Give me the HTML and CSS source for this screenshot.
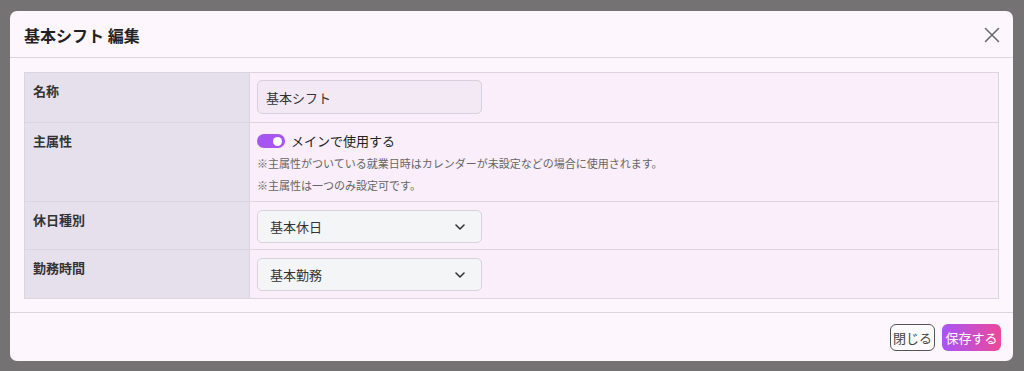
FILE: index.html
```html
<!DOCTYPE html>
<html lang="ja">
<head>
    <meta charset="UTF-8">
    <meta name="viewport" content="width=device-width, initial-scale=1.0">
    <title>基本シフト 編集</title>
    <link rel="stylesheet" href="styles.css">
</head>
<body>
    <div class="modal">
        <div class="modal-header">
            <h2>基本シフト 編集</h2>
            <button class="close" aria-label="閉じる">
                <svg width="16" height="16" viewBox="0 0 16 16"><path d="M1.5 1.5 L14.5 14.5 M14.5 1.5 L1.5 14.5" stroke="#6b6b6b" stroke-width="1.6" fill="none" stroke-linecap="round"/></svg>
            </button>
        </div>

        <div class="modal-body">
            <table class="form-table">
                <tr class="row-name">
                    <th>名称</th>
                    <td><input class="text-input" type="text" value="基本シフト"></td>
                </tr>
                <tr class="row-main">
                    <th>主属性</th>
                    <td>
                        <label class="switch-line">
                            <span class="switch"><span class="knob"></span></span>
                            メインで使用する
                        </label>
                        <p class="note">※主属性がついている就業日時はカレンダーが未設定などの場合に使用されます。</p>
                        <p class="note">※主属性は一つのみ設定可です。</p>
                    </td>
                </tr>
                <tr class="row-select">
                    <th>休日種別</th>
                    <td>
                        <div class="select">
                            <span>基本休日</span>
                            <svg width="12" height="8" viewBox="0 0 12 8"><path d="M2 2 L6 6 L10 2" stroke="#333" stroke-width="1.6" fill="none" stroke-linecap="round" stroke-linejoin="round"/></svg>
                        </div>
                    </td>
                </tr>
                <tr class="row-select last">
                    <th>勤務時間</th>
                    <td>
                        <div class="select">
                            <span>基本勤務</span>
                            <svg width="12" height="8" viewBox="0 0 12 8"><path d="M2 2 L6 6 L10 2" stroke="#333" stroke-width="1.6" fill="none" stroke-linecap="round" stroke-linejoin="round"/></svg>
                        </div>
                    </td>
                </tr>
            </table>
        </div>

        <div class="modal-footer">
            <button class="btn btn-outline">閉じる</button>
            <button class="btn btn-primary">保存する</button>
        </div>
    </div>
</body>
</html>
```

FILE: styles.css
```css
body {
    margin: 0;
    padding: 11px 11px 10px 10px;
    background-color: #757274;
    font-family: "Noto Sans CJK JP", "Noto Sans", sans-serif;
    color: #333;
    height: 371px;
    box-sizing: border-box;
}
.modal {
    background: #fdf7fd;
    border-radius: 7px;
    height: 350px;
    display: flex;
    flex-direction: column;
    overflow: hidden;
}
.modal-header {
    height: 47px;
    flex-shrink: 0;
    box-sizing: border-box;
    border-bottom: 1px solid #ddd5df;
    display: flex;
    align-items: center;
    justify-content: space-between;
    padding: 1px 13px 0 14px;
}
.modal-header h2 {
    margin: 0;
    font-size: 16px;
    font-weight: bold;
    color: #222;
}
.close {
    background: none;
    border: none;
    padding: 0;
    width: 16px;
    height: 16px;
    cursor: pointer;
    display: flex;
}
.modal-body {
    padding: 14px 14px 0 14px;
    flex: 1;
}
.form-table {
    width: 100%;
    border-collapse: collapse;
    font-size: 13px;
}
.form-table th,
.form-table td {
    border: 1px solid #dcd5df;
    vertical-align: top;
    text-align: left;
}
.form-table th {
    width: 208px;
    background: #e6e0ec;
    font-weight: bold;
    color: #333;
    padding: 9px 8px 0 8px;
    line-height: 18px;
}
.form-table td {
    background: #f9eefa;
    padding: 7px 8px 0 7px;
}
.row-name { height: 50px; }
.row-main { height: 79px; }
.row-select { height: 48px; }
.row-select.last { height: 49px; }
.text-input {
    display: block;
    width: 225px;
    height: 34px;
    box-sizing: border-box;
    border: 1px solid #d8d0dc;
    border-radius: 5px;
    background: #f2e9f4;
    padding: 0 8px;
    font-family: inherit;
    font-size: 13px;
    color: #333;
}
.switch-line {
    display: flex;
    align-items: center;
    gap: 6px;
    font-size: 13px;
    color: #222;
    line-height: 22px;
}
.switch {
    width: 28px;
    height: 14px;
    border-radius: 7px;
    background: #a655f0;
    position: relative;
    display: inline-block;
}
.knob {
    position: absolute;
    right: 3px;
    top: 2.5px;
    width: 9px;
    height: 9px;
    border-radius: 50%;
    background: #fff;
}
.note {
    margin: 0;
    font-size: 11px;
    color: #666;
    line-height: 22px;
}
.select {
    width: 225px;
    height: 33px;
    box-sizing: border-box;
    border: 1px solid #d8d2dc;
    border-radius: 5px;
    background: #f4f5f7;
    display: flex;
    align-items: center;
    justify-content: space-between;
    padding: 0 15px 0 12px;
    font-size: 13px;
    color: #333;
    margin-top: 1px;
}
.modal-footer {
    height: 49px;
    flex-shrink: 0;
    box-sizing: border-box;
    border-top: 1px solid #ddd5df;
    display: flex;
    justify-content: flex-end;
    align-items: center;
    gap: 7px;
    padding: 1px 12px 0 0;
}
.btn {
    height: 27px;
    border-radius: 6px;
    font-family: inherit;
    font-size: 13px;
    padding: 0 8px;
    cursor: pointer;
}
.btn-outline {
    background: #fdfbfd;
    border: 1px solid #555;
    color: #444;
    width: 45px;
    padding: 0;
}
.btn-primary {
    background: linear-gradient(to right, #a855f7, #ec4899);
    color: #fff;
    border: none;
    width: 59px;
    padding: 0;
}
```
